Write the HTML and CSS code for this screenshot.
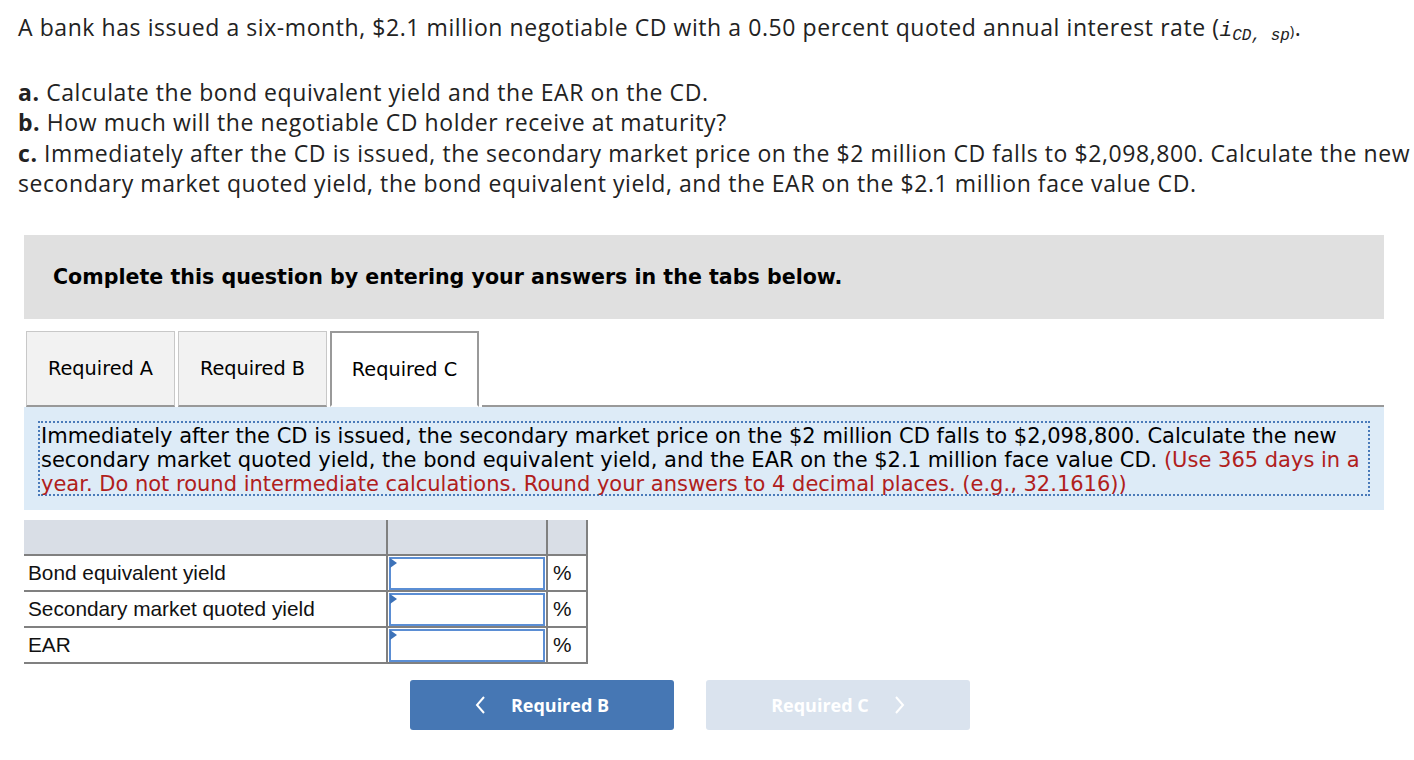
FILE: index.html
```html
<!DOCTYPE html>
<html>
<head>
<meta charset="utf-8">
<link rel="stylesheet" href="styles.css">
</head>
<body>
<div class="page">
  <p class="intro">A bank has issued a six-month, $2.1 million negotiable CD with a 0.50 percent quoted annual interest rate (<span class="math"><i>i</i><sub>CD, sp</sub></span><span class="close">)</span>.</p>
  <div class="parts">
    <div><b>a.</b> Calculate the bond equivalent yield and the EAR on the CD.</div>
    <div><b>b.</b> How much will the negotiable CD holder receive at maturity?</div>
    <div><b>c.</b> Immediately after the CD is issued, the secondary market price on the $2 million CD falls to $2,098,800. Calculate the new secondary market quoted yield, the bond equivalent yield, and the EAR on the $2.1 million face value CD.</div>
  </div>

  <div class="instructions">Complete this question by entering your answers in the tabs below.</div>

  <div class="tabs">
    <div class="tab">Required A</div>
    <div class="tab">Required B</div>
    <div class="tab active">Required C</div>
    <div class="tab-fill"></div>
  </div>

  <div class="panel">
    <div class="prompt">Immediately after the CD is issued, the secondary market price on the $2 million CD falls to $2,098,800. Calculate the new secondary market quoted yield, the bond equivalent yield, and the EAR on the $2.1 million face value CD. <span class="hint">(Use 365 days in a year. Do not round intermediate calculations. Round your answers to 4 decimal places. (e.g., 32.1616))</span></div>
  </div>

  <table class="answers">
    <tr class="head"><td class="c1"></td><td class="c2"></td><td class="c3"></td></tr>
    <tr><td class="c1">Bond equivalent yield</td><td class="c2"><div class="input"></div></td><td class="c3">%</td></tr>
    <tr><td class="c1">Secondary market quoted yield</td><td class="c2"><div class="input"></div></td><td class="c3">%</td></tr>
    <tr><td class="c1">EAR</td><td class="c2"><div class="input"></div></td><td class="c3">%</td></tr>
  </table>

  <div class="nav">
    <div class="btn prev">
      <svg width="12" height="20" viewBox="0 0 12 20"><path d="M9 2 L2 10 L9 18" fill="none" stroke="#fff" stroke-width="2"/></svg>
      <span>Required B</span>
    </div>
    <div class="btn next">
      <span>Required C</span>
      <svg width="12" height="20" viewBox="0 0 12 20"><path d="M3 2 L10 10 L3 18" fill="none" stroke="#fff" stroke-width="2"/></svg>
    </div>
  </div>
</div>
</body>
</html>
```
FILE: styles.css
```css
html, body {
  margin: 0;
  padding: 0;
  background: #fff;
}
.page {
  padding: 12px 0 0 18px;
  width: 1414px;
  box-sizing: border-box;
  color: #222;
}
.intro {
  margin: 0;
  font-family: "Open Sans", sans-serif;
  font-size: 23px;
  letter-spacing: 0.57px;
  line-height: 30px;
}
.math {
  font-family: "Liberation Mono", monospace;
  font-style: italic;
  font-size: 21px;
  letter-spacing: 0;
}
.math sub {
  font-size: 16px;
  vertical-align: -4px;
  line-height: 0;
}
.close {
  font-size: 15px;
}
.parts {
  margin-top: 31px;
  font-family: "Open Sans", sans-serif;
  font-size: 23px;
  letter-spacing: 0.57px;
  line-height: 30.3px;
}
.parts b { font-weight: 700; }
.instructions {
  margin: 37px 0 0 6px;
  width: 1360px;
  height: 84px;
  background: #e0e0e0;
  font-family: "DejaVu Sans", Verdana, sans-serif;
  font-weight: bold;
  font-size: 20.6px;
  color: #000;
  padding: 0 0 0 29px;
  display: flex;
  align-items: center;
  box-sizing: border-box;
}
.tabs {
  margin: 12px 0 0 6px;
  width: 1360px;
  display: flex;
  align-items: flex-end;
  height: 76px;
}
.tab {
  height: 73px;
  width: 147px;
  margin-right: 3px;
  background: #f2f2f2;
  border: 1px solid #c8c8c8;
  border-bottom: 2px solid #999;
  display: flex;
  align-items: center;
  justify-content: center;
  font-family: "DejaVu Sans", Verdana, sans-serif;
  font-size: 19.3px;
  color: #000;
  box-sizing: content-box;
}
.tab:first-child { margin-left: 2px; }
.tab.active {
  background: #fff;
  border: 2px solid #999;
  border-bottom: 2px solid #fff;
  height: 72px;
  width: 145px;
}
.tab-fill {
  flex: 1;
  border-bottom: 2px solid #999;
}
.panel {
  margin: 0 0 0 6px;
  width: 1360px;
  box-sizing: border-box;
  background: #ddebf7;
  padding: 14px 14px 14px 14px;
}
.prompt {
  border: 2px dotted #4a7ab9;
  padding: 1px 0 0 1px;
  height: 75px;
  box-sizing: border-box;
  font-family: "DejaVu Sans", Verdana, sans-serif;
  font-size: 21px;
  line-height: 24px;
  color: #000;
}
.hint { color: #b0201c; }
.answers {
  margin: 10px 0 0 6px;
  border-collapse: collapse;
  font-family: "Liberation Sans", Arial, sans-serif;
  font-size: 20.8px;
  color: #111;
}
.answers td {
  height: 36px;
  padding: 0;
  border-top: 2px solid #808080;
  box-sizing: border-box;
}
.answers tr:last-child td { border-bottom: 2px solid #808080; }
.answers tr.head td {
  background: #d9dee6;
  height: 35px;
  border-top: none;
}
.answers .c1 {
  width: 363px;
  padding-left: 4px;
  box-sizing: border-box;
}
.answers .c2 {
  width: 160px;
  border-left: 2px solid #808080;
  border-right: 2px solid #808080;
  padding: 1px 1px 0 1px;
}
.answers .c3 {
  width: 40px;
  border-right: 2px solid #808080;
  padding-left: 5px;
}
.input {
  position: relative;
  height: 33px;
  border: 2px solid #5b8ed4;
  background: #fff;
  box-sizing: border-box;
}
.input::before {
  content: "";
  position: absolute;
  left: -1px;
  top: -1px;
  border-left: 7px solid #3d72b8;
  border-top: 5px solid transparent;
  border-bottom: 5px solid transparent;
}
.nav {
  display: flex;
  gap: 32px;
  margin: 16px 0 0 392px;
}
.btn {
  width: 264px;
  height: 50px;
  border-radius: 3px;
  display: flex;
  align-items: center;
  justify-content: center;
  gap: 24px;
  font-family: "Open Sans", sans-serif;
  font-weight: 700;
  font-size: 18px;
  color: #fff;
}
.btn.prev { background: #4677b4; }
.btn.next { background: #dae3ee; }
```
